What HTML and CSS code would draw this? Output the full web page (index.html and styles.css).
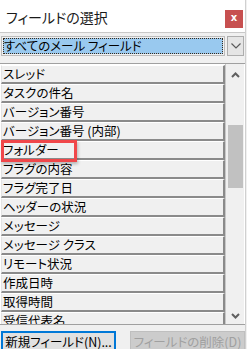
FILE: index.html
```html
<!DOCTYPE html>
<html lang="ja">
<head>
<meta charset="utf-8">
<link rel="stylesheet" href="styles.css">
</head>
<body>
<div class="window">
  <div class="titlebar">
    <span class="title">フィールドの選択</span>
    <span class="close">x</span>
  </div>
  <div class="combo">
    <div class="combo-field"><span class="combo-text">すべてのメール フィールド</span></div>
    <div class="combo-arrow">
      <svg width="10" height="6" viewBox="0 0 10 6"><path d="M0.5 0.5 L5 5 L9.5 0.5" fill="none" stroke="#5a5a5a" stroke-width="1.2"/></svg>
    </div>
  </div>
  <div class="listbox">
    <div class="rows">
      <div class="row">スレッド</div>
      <div class="row">タスクの件名</div>
      <div class="row">バージョン番号</div>
      <div class="row">バージョン番号 (内部)</div>
      <div class="row">フォルダー</div>
      <div class="row">フラグの内容</div>
      <div class="row">フラグ完了日</div>
      <div class="row">ヘッダーの状況</div>
      <div class="row">メッセージ</div>
      <div class="row">メッセージ クラス</div>
      <div class="row">リモート状況</div>
      <div class="row">作成日時</div>
      <div class="row">取得時間</div>
      <div class="row">受信代表名</div>
    </div>
    <div class="scrollbar">
      <svg class="sb-arrow" width="9" height="6" viewBox="0 0 9 6"><path d="M1 5 L4.5 1.5 L8 5" fill="none" stroke="#606060" stroke-width="2"/></svg>
      <div class="sb-track"><div class="sb-thumb"></div></div>
      <svg class="sb-arrow" width="9" height="6" viewBox="0 0 9 6"><path d="M1 1 L4.5 4.5 L8 1" fill="none" stroke="#606060" stroke-width="2"/></svg>
    </div>
    <div class="highlight"></div>
  </div>
  <div class="buttons">
    <div class="btn btn-default">新規フィールド(N)...</div>
    <div class="btn btn-disabled">フィールドの削除(D)</div>
  </div>
</div>
</body>
</html>
```
FILE: styles.css
```css
html, body {
  margin: 0;
  padding: 0;
}
body {
  width: 247px;
  height: 349px;
  overflow: hidden;
  background: #f0f0f0;
  font-family: "Noto Sans CJK JP", "Noto Sans", sans-serif;
  font-feature-settings: "palt";
  color: #000;
}
.window {
  display: flex;
  flex-direction: column;
  width: 246px;
  height: 349px;
  border-right: 1px solid #d0d0d0;
  box-sizing: border-box;
}
.titlebar {
  height: 32px;
  flex: none;
  background: #fff;
  border-bottom: 1px solid #c8c8c8;
  display: flex;
  align-items: flex-start;
  padding-left: 6px;
  padding-right: 2px;
}
.title {
  font-size: 14px;
  line-height: 18px;
  margin-top: 8px;
  color: #1a1a1a;
}
.close {
  margin-left: auto;
  margin-top: 10px;
  width: 18px;
  height: 18px;
  background: #c75050;
  color: #fff;
  font-family: "DejaVu Sans", sans-serif;
  font-weight: bold;
  font-size: 10px;
  line-height: 16px;
  text-align: center;
}
.combo {
  flex: none;
  display: flex;
  margin-top: 3px;
  height: 20px;
  padding-left: 1px;
  gap: 2px;
}
.combo-field {
  width: 224px;
  height: 20px;
  box-sizing: border-box;
  border: 1px solid #bcbcbc;
  padding: 1px;
}
.combo-text {
  display: block;
  height: 16px;
  background: #99c9ef;
  outline: 1px dotted #3a2a1a;
  outline-offset: -1px;
  font-size: 12.5px;
  line-height: 16px;
  padding-left: 1px;
  white-space: nowrap;
}
.combo-arrow {
  width: 17px;
  height: 20px;
  box-sizing: border-box;
  border: 1px solid #adadad;
  background: #e5e5e5;
  display: flex;
  align-items: center;
  justify-content: center;
}
.listbox {
  position: relative;
  flex: none;
  margin-top: 7px;
  height: 262px;
  display: flex;
  border-top: 1px solid #a0a0a0;
  border-bottom: 1px solid #a0a0a0;
  box-sizing: border-box;
  background: #fff;
}
.rows {
  width: 226px;
  overflow: hidden;
  padding-top: 1px;
  padding-left: 1px;
  box-sizing: border-box;
  border-right: 1px solid #c8c8c8;
}
.row {
  height: 19px;
  box-sizing: border-box;
  background: #f0f0f0;
  border-top: 1px solid #ffffff;
  border-left: 1px solid #e3e3e3;
  border-right: 2px solid #8a8a8a;
  border-bottom: 2px solid #8a8a8a;
  font-size: 12.5px;
  line-height: 16px;
  padding-left: 1px;
  white-space: nowrap;
  overflow: hidden;
}
.scrollbar {
  width: 18px;
  display: flex;
  flex-direction: column;
  align-items: center;
  background: #f0f0f0;
  padding: 8px 0 5px;
  box-sizing: border-box;
}
.sb-arrow {
  flex: none;
}
.sb-track {
  flex: 1;
  width: 100%;
  padding-top: 47px;
  box-sizing: border-box;
}
.sb-thumb {
  margin: 0 auto;
  width: 15px;
  height: 63px;
  background: #c1c1c1;
}
.highlight {
  position: absolute;
  left: 1px;
  top: 76px;
  width: 76px;
  height: 22px;
  box-sizing: border-box;
  border: 3px solid #f0474a;
  box-shadow: 1px 2px 3px rgba(0,0,0,0.25);
}
.buttons {
  flex: none;
  display: flex;
  gap: 14px;
  margin-top: 6px;
  padding-left: 1px;
}
.btn {
  width: 115px;
  height: 22px;
  box-sizing: border-box;
  font-size: 12.5px;
  line-height: 17px;
  text-align: center;
  white-space: nowrap;
}
.btn-default {
  border: 2px solid #0078d7;
  background: #e1e1e1;
}
.btn-disabled {
  border: 1px solid #bfbfbf;
  background: #cccccc;
  color: #a0a0a0;
  line-height: 19px;
}
```
